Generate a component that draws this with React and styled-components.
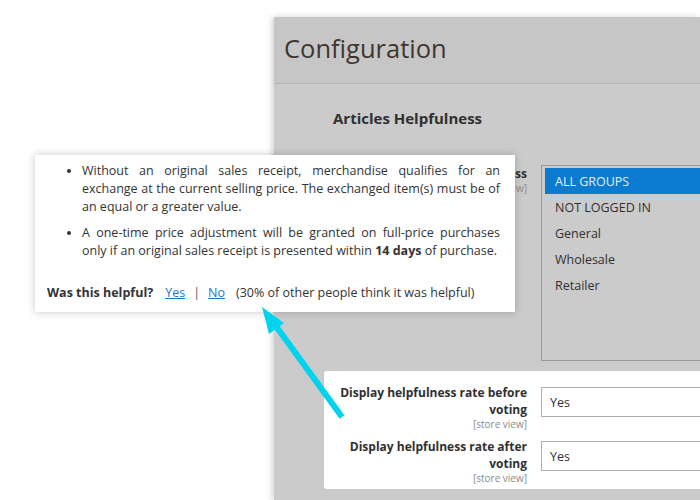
import React from "react";
import styled, { createGlobalStyle } from "styled-components";

const Global = createGlobalStyle`
  html, body { margin: 0; padding: 0; background: #fff; }
  body { font-family: "Open Sans", "Liberation Sans", sans-serif; }
  * { box-sizing: border-box; }
`;

const Page = styled.div`
  position: relative;
  width: 700px;
  height: 500px;
  overflow: hidden;
  background: #fff;
  padding-top: 17px;
`;

const AdminWindow = styled.div`
  margin-left: 274px;
  height: 483px;
  background: #cbcbcb;
  box-shadow: -2px 0 6px rgba(0, 0, 0, 0.18);
  overflow: hidden;
`;

const Header = styled.div`
  height: 67px;
  background: #c6c6c6;
  border-bottom: 1px solid #b3b3b3;
  display: flex;
  align-items: center;
  padding: 0 0 4px 10px;
`;

const Title = styled.h1`
  margin: 0;
  font-weight: 400;
  font-size: 25.5px;
  color: #41362f;
`;

const Body = styled.div`
  padding: 24px 0 0 50px;
`;

const SectionTitle = styled.h2`
  margin: 0 0 37px 9px;
  font-size: 15px;
  line-height: 20px;
  font-weight: 700;
  color: #303030;
`;

const FieldRow = styled.div`
  display: grid;
  grid-template-columns: 187px 200px;
  column-gap: 14px;
  align-items: start;
  padding-left: 16px;
  & + & { margin-top: 8px; }
`;

const Label = styled.div`
  text-align: right;
  font-size: 12px;
  font-weight: 700;
  line-height: 17px;
  color: #303030;
  white-space: nowrap;
`;

const Scope = styled.div`
  font-size: 10px;
  line-height: 12px;
  font-weight: 400;
  color: #8a8a8a;
`;

const ListBox = styled.div`
  height: 196px;
  border: 1px solid #999;
  padding: 2px 0 0 3px;
  margin-bottom: 10px;
`;

const Option = styled.div`
  height: 26px;
  display: flex;
  align-items: center;
  padding: 1px 0 0 10px;
  font-size: 12.5px;
  color: ${(p) => (p.$selected ? "#e6eef6" : "#303030")};
  background: ${(p) => (p.$selected ? "#0a7bcf" : "transparent")};
`;

const Card = styled.div`
  background: #fff;
  border-radius: 3px 0 0 3px;
  padding: 13px 0 5px 0;
`;

const Select = styled.div`
  margin-top: 3px;
  height: 30px;
  border: 1px solid #adadad;
  display: flex;
  align-items: center;
  padding-left: 8px;
  font-size: 12.5px;
  color: #303030;
  background: #fff;
`;

const Popup = styled.div`
  position: absolute;
  left: 35px;
  top: 155px;
  width: 480px;
  background: #fff;
  box-shadow: 0 0 8px rgba(0, 0, 0, 0.22);
  padding: 7px 15px 10px 12px;
  color: #333;
  font-size: 12.5px;
  line-height: 18px;
`;

const List = styled.ul`
  margin: 0;
  padding-left: 35px;
  list-style: disc;
`;

const Item = styled.li`
  text-align: justify;
  & + & { margin-top: 8px; }
`;

const Helpful = styled.div`
  margin-top: 24px;
  display: flex;
  align-items: baseline;
  gap: 8px;
  white-space: nowrap;
`;

const Question = styled.strong`
  font-weight: 700;
  margin-right: 4px;
`;

const VoteLink = styled.a`
  color: #1979c3;
  text-decoration: underline;
  cursor: pointer;
`;

const Sep = styled.span`
  color: #555;
`;

const Note = styled.span`
  margin-left: 3px;
`;

const ArrowLayer = styled.svg`
  position: absolute;
  left: 0;
  top: 0;
  pointer-events: none;
`;

const groups = ["ALL GROUPS", "NOT LOGGED IN", "General", "Wholesale", "Retailer"];

export default function App() {
  return (
    <>
      <Global />
      <Page>
        <AdminWindow>
          <Header>
            <Title>Configuration</Title>
          </Header>
          <Body>
            <SectionTitle>Articles Helpfulness</SectionTitle>
            <FieldRow>
              <Label>
                Vote Access
                <Scope>[store view]</Scope>
              </Label>
              <ListBox>
                {groups.map((g, i) => (
                  <Option key={g} $selected={i === 0}>
                    {g}
                  </Option>
                ))}
              </ListBox>
            </FieldRow>
            <Card>
              <FieldRow>
                <Label>
                  Display helpfulness rate before
                  <br />
                  voting
                  <Scope>[store view]</Scope>
                </Label>
                <Select>Yes</Select>
              </FieldRow>
              <FieldRow>
                <Label>
                  Display helpfulness rate after
                  <br />
                  voting
                  <Scope>[store view]</Scope>
                </Label>
                <Select>Yes</Select>
              </FieldRow>
            </Card>
          </Body>
        </AdminWindow>

        <Popup>
          <List>
            <Item>
              Without an original sales receipt, merchandise qualifies for an
              exchange at the current selling price. The exchanged item(s) must
              be of an equal or a greater value.
            </Item>
            <Item>
              A one-time price adjustment will be granted on full-price
              purchases only if an original sales receipt is presented within{" "}
              <strong>14 days</strong> of purchase.
            </Item>
          </List>
          <Helpful>
            <Question>Was this helpful?</Question>
            <VoteLink>Yes</VoteLink>
            <Sep>|</Sep>
            <VoteLink>No</VoteLink>
            <Note>(30% of other people think it was helpful)</Note>
          </Helpful>
        </Popup>

        <ArrowLayer width="700" height="500" viewBox="0 0 700 500">
          <line x1="342" y1="417" x2="273" y2="322" stroke="#00d3ee" strokeWidth="6" />
          <polygon points="262,307 284,323 269,334" fill="#00d3ee" />
        </ArrowLayer>
      </Page>
    </>
  );
}
